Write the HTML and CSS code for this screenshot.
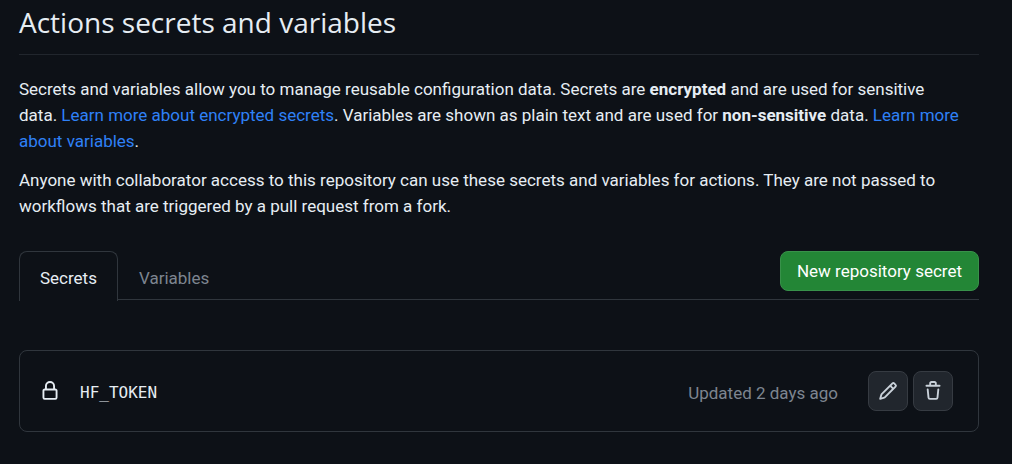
FILE: index.html
```html
<!DOCTYPE html>
<html lang="en">
<head>
<meta charset="utf-8">
<meta name="viewport" content="width=device-width, initial-scale=1">
<title>Actions secrets and variables</title>
<link rel="stylesheet" href="styles.css">
</head>
<body>
<main class="page">
  <h1 class="title">Actions secrets and variables</h1>
  <div class="intro">
    <p class="text">Secrets and variables allow you to manage reusable configuration data. Secrets are <strong>encrypted</strong> and are used for sensitive data. <a class="link" href="#">Learn more about encrypted secrets</a>. Variables are shown as plain text and are used for <strong>non-sensitive</strong> data. <a class="link" href="#">Learn more about variables</a>.</p>
    <p class="text">Anyone with collaborator access to this repository can use these secrets and variables for actions. They are not passed to workflows that are triggered by a pull request from a fork.</p>
  </div>
  <div class="tabbar">
    <nav class="tabs" aria-label="Secrets and variables">
      <a class="tab tab-selected" href="#" aria-current="page">Secrets</a>
      <a class="tab" href="#">Variables</a>
    </nav>
    <button class="button button-primary" type="button">New repository secret</button>
  </div>
  <ul class="secret-list">
    <li class="secret">
      <svg class="icon" viewBox="0 0 16 16" aria-hidden="true"><path d="M4 4a4 4 0 0 1 8 0v2h.25c.966 0 1.75.784 1.75 1.75v5.5A1.75 1.75 0 0 1 12.25 15h-8.500A1.750 1.750 0 0 1 2 13.250v-5.500C2 6.784 2.784 6 3.750 6H4Zm8.250 3.500h-8.500a.25.25 0 0 0-.25.25v5.500c0 .138.112.25.25.25h8.500a.25.25 0 0 0 .25-.25v-5.500a.25.25 0 0 0-.25-.25ZM10.500 6V4a2.500 2.500 0 1 0-5 0v2Z"/></svg>
      <code class="secret-name">HF_TOKEN</code>
      <span class="updated">Updated 2 days ago</span>
      <div class="actions">
        <button class="button button-icon" type="button" aria-label="Edit HF_TOKEN">
          <svg class="icon" viewBox="0 0 16 16" aria-hidden="true"><path d="M11.013 1.427a1.750 1.750 0 0 1 2.474 0l1.086 1.086a1.750 1.750 0 0 1 0 2.474l-8.610 8.610c-.21.21-.47.364-.756.445l-3.251.93a.75.75 0 0 1-.927-.928l.929-3.250c.081-.286.235-.547.445-.758l8.610-8.610Zm.176 4.823L9.750 4.810l-6.286 6.287a.253.253 0 0 0-.064.108l-.558 1.953 1.953-.558a.253.253 0 0 0 .108-.064Zm1.238-3.763a.25.25 0 0 0-.354 0L10.811 3.750l1.439 1.440 1.263-1.263a.25.25 0 0 0 0-.354Z"/></svg>
        </button>
        <button class="button button-icon" type="button" aria-label="Delete HF_TOKEN">
          <svg class="icon" viewBox="0 0 16 16" aria-hidden="true"><path d="M11 1.750V3h2.250a.75.75 0 0 1 0 1.500H2.750a.75.75 0 0 1 0-1.500H5V1.750C5 .784 5.784 0 6.750 0h2.500C10.216 0 11 .784 11 1.750ZM4.496 6.675l.66 6.600a.25.25 0 0 0 .249.225h5.190a.25.25 0 0 0 .249-.225l.66-6.600a.75.75 0 0 1 1.492.149l-.66 6.600A1.748 1.748 0 0 1 10.595 15h-5.190a1.750 1.750 0 0 1-1.741-1.575l-.66-6.600a.75.75 0 1 1 1.492-.15ZM6.500 1.750V3h3V1.750a.25.25 0 0 0-.25-.25h-2.500a.25.25 0 0 0-.25.25Z"/></svg>
        </button>
      </div>
    </li>
  </ul>
</main>
</body>
</html>
```
FILE: styles.css
```css
* {
  box-sizing: border-box;
}

body {
  margin: 0;
  background: #0d1117;
  color: #e6edf3;
  font-family: Roboto, "Open Sans", sans-serif;
  font-size: 17px;
  line-height: 26px;
}

.page {
  padding: 0 33px 32px 19px;
}

.title {
  margin: 0;
  padding-bottom: 10px;
  border-bottom: 1px solid #21262d;
  font-family: "Open Sans", sans-serif;
  font-size: 28px;
  font-weight: 400;
  line-height: 44px;
}

.intro {
  display: flex;
  flex-direction: column;
  gap: 13px;
  padding: 21px 16px 32px 0;
}

.text {
  margin: 0;
}

.text strong {
  font-weight: 700;
}

.link {
  color: #2f81f7;
  text-decoration: none;
}

.tabbar {
  display: flex;
  justify-content: space-between;
  align-items: flex-start;
  border-bottom: 1px solid #30363d;
}

.tabs {
  display: flex;
  margin-bottom: -2px;
}

.tab {
  padding: 13px 20px 10px;
  border: 1px solid transparent;
  border-bottom: 0;
  color: #7d8590;
  text-decoration: none;
}

.tab-selected {
  border-color: #30363d;
  border-radius: 8px 8px 0 0;
  background: #0d1117;
  color: #e6edf3;
}

.button {
  display: flex;
  align-items: center;
  justify-content: center;
  height: 40px;
  border: 1px solid #363b42;
  border-radius: 8px;
  font: inherit;
  cursor: pointer;
}

.button-primary {
  padding: 0 16px;
  border-color: #38914a;
  background: #238636;
  color: #ffffff;
}

.button-icon {
  width: 40px;
  padding: 0;
  background: #21262d;
  color: #c9d1d9;
}

.icon {
  width: 20px;
  height: 20px;
  fill: currentColor;
}

.secret-list {
  margin: 50px 0 0;
  padding: 0;
  border: 1px solid #30363d;
  border-radius: 8px;
  list-style: none;
}

.secret {
  display: flex;
  align-items: center;
  padding: 20px 25px 20px 20px;
}

.secret-name,
.updated {
  padding-top: 3px;
}

.secret-name {
  margin-left: 20px;
  font-family: "DejaVu Sans Mono", monospace;
  font-size: 16px;
}

.updated {
  margin-left: auto;
  color: #7d8590;
}

.actions {
  display: flex;
  gap: 5px;
  margin-left: 30px;
}
```
